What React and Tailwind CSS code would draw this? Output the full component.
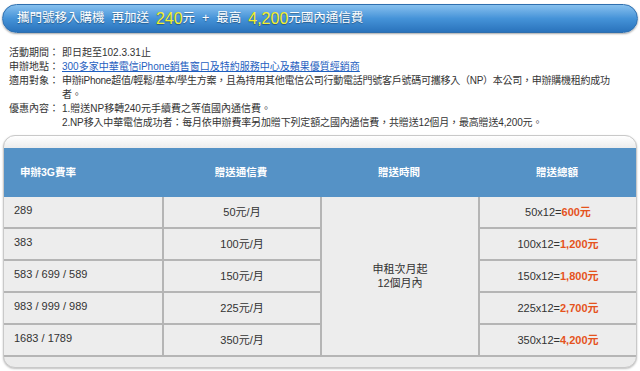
export default function App() {
  const rows = [
    ["289", "50元/月", "50x12=", "600元"],
    ["383", "100元/月", "100x12=", "1,200元"],
    ["583 / 699 / 589", "150元/月", "150x12=", "1,800元"],
    ["983 / 999 / 989", "225元/月", "225x12=", "2,700元"],
    ["1683 / 1789", "350元/月", "350x12=", "4,200元"],
  ];
  const font = "font-['Liberation_Sans','Noto_Sans_CJK_TC',sans-serif]";
  return (
    <div className={`w-[640px] h-[371px] bg-white overflow-hidden ${font}`}>
      {/* title pill */}
      <div className="pt-[4px] px-[2px]">
        <div className="h-[29px] rounded-full border border-[#2f6fae] bg-gradient-to-b from-[#86c0ee] via-[#4593d8] to-[#2a73bc] shadow-[0_1px_2px_rgba(0,0,0,0.35)] flex items-center pl-[14px] text-white text-[12.5px] [text-shadow:0_1px_1px_rgba(0,0,0,0.35)] whitespace-nowrap">
          <span>攜門號移入購機&nbsp;&nbsp;再加送&nbsp;&nbsp;</span>
          <span className="text-[#f3f02c] text-[16px]">240</span>
          <span>元&nbsp;&nbsp;+&nbsp;&nbsp;最高&nbsp;&nbsp;</span>
          <span className="text-[#f3f02c] text-[16px]">4,200</span>
          <span>元國內通信費</span>
        </div>
      </div>

      {/* info */}
      <div className="mt-[13px] pl-[9px] text-[10px] leading-[14px] text-[#333]">
        <div className="flex">
          <div className="w-[53px] shrink-0">活動期間：</div>
          <div>即日起至102.3.31止</div>
        </div>
        <div className="flex">
          <div className="w-[53px] shrink-0">申辦地點：</div>
          <div className="text-[#1f5fbf] underline">300多家中華電信iPhone銷售窗口及特約服務中心及蘋果優質經銷商</div>
        </div>
        <div className="flex">
          <div className="w-[53px] shrink-0">適用對象：</div>
          <div className="w-[560px] tracking-[-0.25px]">申辦iPhone超值/輕鬆/基本/學生方案，且為持用其他電信公司行動電話門號客戶號碼可攜移入（NP）本公司，申辦購機租約成功者。</div>
        </div>
        <div className="flex">
          <div className="w-[53px] shrink-0">優惠內容：</div>
          <div>
            <div>1.贈送NP移轉240元手續費之等值國內通信費。</div>
            <div className="tracking-[-0.15px]">2.NP移入中華電信成功者：每月依申辦費率另加贈下列定額之國內通信費，共贈送12個月，最高贈送4,200元。</div>
          </div>
        </div>
      </div>

      {/* table */}
      <div className="mt-[5px] mx-[3px] rounded-[12px] border border-[#c9c9c9] bg-gradient-to-b from-[#ffffff] to-[#ebebeb] bg-[length:100%_13px] bg-no-repeat bg-[#ebebeb] overflow-hidden shadow-[0_1px_2px_rgba(0,0,0,0.25)] pt-[12px] pb-[10px]">
        <div className="grid grid-cols-4 h-[49px] bg-[#5592c6] text-white text-[10.5px] font-bold">
          <div className="flex items-center pl-[16px]">申辦3G費率</div>
          <div className="flex items-center justify-center">贈送通信費</div>
          <div className="flex items-center justify-center">贈送時間</div>
          <div className="flex items-center justify-center">贈送總額</div>
        </div>
        <div className="grid grid-cols-4 grid-rows-[repeat(5,32px)] bg-[#ededed] text-[11px] text-[#333]">
          <div className="col-start-3 row-start-1 row-span-5 border-l-2 border-b-2 border-[#b5b5b5] flex flex-col items-center justify-center leading-[14px]">
            <div>申租次月起</div>
            <div>12個月內</div>
          </div>
          {rows.map((r, i) => [
            <div key={`a${i}`} className="border-b-2 border-[#b5b5b5] flex items-center pl-[10px] pb-[3px]">{r[0]}</div>,
            <div key={`b${i}`} className="border-l-2 border-b-2 border-[#b5b5b5] flex items-center justify-center pt-[1px]">{r[1]}</div>,
            <div key={`d${i}`} className="border-l-2 border-b-2 border-[#b5b5b5] flex items-center justify-center">
              {r[2]}<span className="text-[#e5531d] font-bold">{r[3]}</span>
            </div>,
          ])}
        </div>
      </div>
    </div>
  );
}
